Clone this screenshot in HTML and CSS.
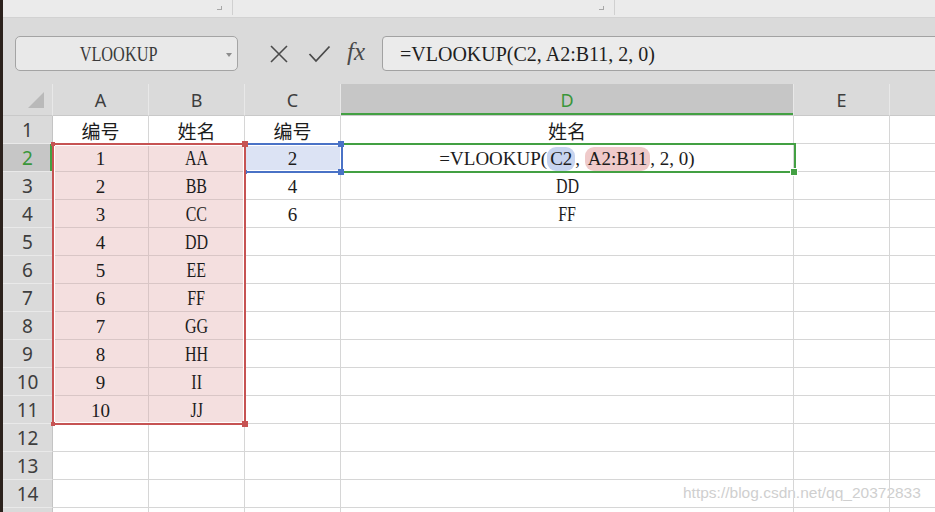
FILE: index.html
```html
<!DOCTYPE html>
<html lang="zh-CN">
<head>
<meta charset="utf-8">
<title>VLOOKUP</title>
<link rel="stylesheet" href="styles.css">
</head>
<body>
<div class="app">
  <div class="edge"></div>
  <div class="main">
    <div class="topbar">
      <div class="seg seg1"><span class="corner"></span></div>
      <div class="seg seg2"><span class="corner"></span></div>
    </div>
    <div class="toolbar">
      <div class="namebox"><span class="namebox-text">VLOOKUP</span><span class="caret"></span></div>
      <div class="fxbtns">
        <svg class="ico ico-x" width="20" height="20" viewBox="0 0 20 20"><path d="M2 2 L18 18 M18 2 L2 18" stroke="#4a4a4a" stroke-width="1.6" fill="none"/></svg>
        <svg class="ico ico-ok" width="23" height="20" viewBox="0 0 23 20"><path d="M1.5 10 L8 17 L21.5 2.5" stroke="#4a4a4a" stroke-width="1.8" fill="none"/></svg>
        <span class="fx">fx</span>
      </div>
      <div class="formula">=VLOOKUP(C2, A2:B11, 2, 0)</div>
    </div>
    <div class="sheet">
      <div class="grid">
        <div class="h corner-h"><span class="tri"></span></div>
        <div class="h col">A</div>
        <div class="h col">B</div>
        <div class="h col">C</div>
        <div class="h col col-act">D</div>
        <div class="h col">E</div>
        <div class="h col col-f"></div>

        <div class="h row">1</div>
        <div class="c">编号</div><div class="c">姓名</div><div class="c">编号</div><div class="c">姓名</div><div class="c"></div><div class="c"></div>

        <div class="h row row-act">2</div>
        <div class="c r">1</div><div class="c r"><span class="lat">AA</span></div><div class="c b">2</div>
        <div class="c">=VLOOKUP(<span class="ref ref-c">C2</span>, <span class="ref ref-a">A2:B11</span>, 2, 0)</div>
        <div class="c"></div><div class="c"></div>

        <div class="h row">3</div>
        <div class="c r">2</div><div class="c r"><span class="lat">BB</span></div><div class="c">4</div><div class="c"><span class="lat">DD</span></div><div class="c"></div><div class="c"></div>

        <div class="h row">4</div>
        <div class="c r">3</div><div class="c r"><span class="lat">CC</span></div><div class="c">6</div><div class="c"><span class="lat">FF</span></div><div class="c"></div><div class="c"></div>

        <div class="h row">5</div>
        <div class="c r">4</div><div class="c r"><span class="lat">DD</span></div><div class="c"></div><div class="c"></div><div class="c"></div><div class="c"></div>

        <div class="h row">6</div>
        <div class="c r">5</div><div class="c r"><span class="lat">EE</span></div><div class="c"></div><div class="c"></div><div class="c"></div><div class="c"></div>

        <div class="h row">7</div>
        <div class="c r">6</div><div class="c r"><span class="lat">FF</span></div><div class="c"></div><div class="c"></div><div class="c"></div><div class="c"></div>

        <div class="h row">8</div>
        <div class="c r">7</div><div class="c r"><span class="lat">GG</span></div><div class="c"></div><div class="c"></div><div class="c"></div><div class="c"></div>

        <div class="h row">9</div>
        <div class="c r">8</div><div class="c r"><span class="lat">HH</span></div><div class="c"></div><div class="c"></div><div class="c"></div><div class="c"></div>

        <div class="h row">10</div>
        <div class="c r">9</div><div class="c r"><span class="lat">II</span></div><div class="c"></div><div class="c"></div><div class="c"></div><div class="c"></div>

        <div class="h row">11</div>
        <div class="c r">10</div><div class="c r"><span class="lat">JJ</span></div><div class="c"></div><div class="c"></div><div class="c"></div><div class="c"></div>

        <div class="h row">12</div>
        <div class="c"></div><div class="c"></div><div class="c"></div><div class="c"></div><div class="c"></div><div class="c"></div>

        <div class="h row">13</div>
        <div class="c"></div><div class="c"></div><div class="c"></div><div class="c"></div><div class="c"></div><div class="c"></div>

        <div class="h row">14</div>
        <div class="c"></div><div class="c"></div><div class="c"></div><div class="c"></div><div class="c"></div><div class="c"></div>

        <div class="h row"></div>
        <div class="c"></div><div class="c"></div><div class="c"></div><div class="c"></div><div class="c"></div><div class="c"></div>
      </div>

      <div class="selbox sel-green"></div>
      <div class="handle h-green"></div>
      <div class="selbox sel-blue"></div>
      <div class="handle h-blue-tr"></div>
      <div class="handle h-blue-br"></div>
      <div class="handle h-blue-bl"></div>
      <div class="selbox sel-red"></div>
      <div class="handle h-red-tl"></div>
      <div class="handle h-red-tr"></div>
      <div class="handle h-red-br"></div>
      <div class="handle h-red-bl"></div>

      <div class="watermark">https://blog.csdn.net/qq_20372833</div>
    </div>
  </div>
</div>
</body>
</html>
```

FILE: styles.css
```css
* { box-sizing: border-box; }
html, body {
  margin: 0;
  padding: 0;
  width: 935px;
  height: 512px;
  overflow: hidden;
  background: #ffffff;
}
.app {
  display: flex;
  width: 935px;
  height: 512px;
  overflow: hidden;
}
.edge {
  width: 3px;
  flex: 0 0 3px;
  background: #2b211c;
}
.main {
  flex: 1;
  display: flex;
  flex-direction: column;
  min-width: 0;
}

/* top ribbon strip */
.topbar {
  height: 18px;
  flex: 0 0 18px;
  display: flex;
  background: #ebebeb;
  border-bottom: 1px solid #d2d2d2;
}
.seg {
  height: 15px;
  border-right: 1px solid #d0d0d0;
  position: relative;
}
.seg1 { width: 230px; }
.seg2 { width: 382px; }
.corner {
  position: absolute;
  right: 10px;
  top: 6px;
  width: 5px;
  height: 4px;
  border-right: 1px solid #a8a8a8;
  border-bottom: 1px solid #a8a8a8;
}

/* formula toolbar */
.toolbar {
  height: 66px;
  flex: 0 0 66px;
  background: #dadada;
  display: flex;
  align-items: flex-start;
  padding-top: 18px;
}
.namebox {
  margin-left: 12px;
  width: 223px;
  height: 35px;
  background: #e9e9e9;
  border: 1px solid #a4a4a4;
  border-radius: 5px;
  display: flex;
  align-items: center;
  justify-content: center;
  position: relative;
}
.namebox-text {
  display: inline-block;
  font-family: "Liberation Serif", serif;
  font-size: 22px;
  color: #3a3a3a;
  margin-left: -16px;
  transform: scaleX(0.74);
  padding-top: 1px;
}
.caret {
  position: absolute;
  right: 5px;
  top: 16px;
  width: 0;
  height: 0;
  border-left: 3px solid transparent;
  border-right: 3px solid transparent;
  border-top: 4px solid #8c8c8c;
}
.fxbtns {
  width: 144px;
  height: 35px;
  display: flex;
  align-items: center;
  padding-left: 31px;
}
.ico { display: block; }
.ico-ok { margin-left: 19px; }
.fx {
  margin-left: 16px;
  font-family: "Liberation Serif", serif;
  font-style: italic;
  font-size: 25px;
  color: #4a4a4a;
  margin-top: -3px;
}
.formula {
  flex: 1;
  height: 35px;
  margin-right: -12px;
  background: #ebebeb;
  border: 1px solid #a2a2a2;
  border-radius: 4px 0 0 4px;
  padding-left: 17px;
  padding-top: 1px;
  display: flex;
  align-items: center;
  font-family: "Liberation Serif", serif;
  font-size: 20px;
  color: #1e1e1e;
}

/* sheet */
.sheet {
  position: relative;
  flex: 1;
  min-height: 0;
}
.grid {
  display: grid;
  grid-template-columns: 50px 96px 96px 96px 453px 96px 60px;
  grid-template-rows: 32px repeat(15, 28px);
}
.h {
  background: #dadada;
  font-family: "Noto Sans", "Noto Sans CJK SC", sans-serif;
  font-size: 18px;
  color: #3e3e3e;
  display: flex;
  align-items: center;
  justify-content: center;
}
.col {
  border-right: 1px solid #e8e8e8;
  border-bottom: 1px solid #c9c9c9;
  padding-top: 1px;
}
.col-act {
  background: #c6c6c6;
  color: #3a963a;
  box-shadow: inset 0 -2px 0 #43a043;
}
.corner-h {
  border-right: 1px solid #e8e8e8;
  border-bottom: 1px solid #c9c9c9;
  position: relative;
}
.tri {
  position: absolute;
  left: 25px;
  top: 8px;
  width: 0;
  height: 0;
  border-left: 16px solid transparent;
  border-bottom: 16px solid #b9b9b9;
}
.row {
  border-right: 1px solid #c4c4c4;
  border-bottom: 1px solid #e9e9e9;
  font-size: 19px;
  padding-top: 1px;
}
.row-act {
  background: #c6c6c6;
  color: #3a963a;
  box-shadow: inset -2px 0 0 #43a043;
}
.c {
  border-right: 1px solid #d6d6d6;
  border-bottom: 1px solid #d6d6d6;
  display: flex;
  align-items: center;
  justify-content: center;
  padding-top: 2px;
  font-family: "Liberation Serif", "Noto Sans CJK SC", serif;
  font-size: 19px;
  color: #1c1c1c;
  white-space: pre;
  background: #ffffff;
}
.lat {
  display: inline-block;
  font-size: 20px;
  transform: scaleX(0.8);
}
.c.r {
  background: #f4dfdf;
  border-right-color: #d9c6c6;
  border-bottom-color: #d9c6c6;
}
.c.b {
  background: #dce3f4;
}
.ref {
  display: inline-block;
  line-height: 24px;
  padding: 0 3px;
  border-radius: 9px;
}
.ref-c { background: #c7d4ef; }
.ref-a { background: #efcaca; }

/* selection overlays */
.selbox {
  position: absolute;
  border: 2px solid;
}
.sel-red {
  left: 49px;
  top: 59px;
  width: 194px;
  height: 282px;
  border-color: #c65353;
  box-shadow: inset 0 0 0 1px #ffffff;
}
.sel-blue {
  left: 240px;
  top: 59px;
  width: 100px;
  height: 30px;
  border-color: #4a72c6;
  box-shadow: inset 0 0 0 1px #ffffff;
}
.sel-green {
  left: 337px;
  top: 59px;
  width: 456px;
  height: 30px;
  border-color: #43a043;
}
.handle {
  position: absolute;
  width: 6px;
  height: 6px;
}
.h-green { left: 788px; top: 85px; background: #43a043; box-shadow: 0 0 0 1px #ffffff; }
.h-blue-tr { left: 335px; top: 57px; background: #4a72c6; }
.h-blue-br { left: 335px; top: 85px; background: #4a72c6; }
.h-blue-bl { left: 240px; top: 86px; width: 4px; height: 4px; background: #4a72c6; }
.h-red-tl { left: 48px; top: 58px; width: 4px; height: 4px; background: #c65353; }
.h-red-tr { left: 239px; top: 57px; background: #c65353; }
.h-red-br { left: 239px; top: 337px; background: #c65353; }
.h-red-bl { left: 48px; top: 338px; width: 4px; height: 4px; background: #c65353; }

.watermark {
  position: absolute;
  left: 680px;
  top: 400px;
  font-family: "Liberation Sans", Arial, sans-serif;
  font-size: 15.5px;
  color: #cfcfcf;
  text-shadow: 0 0 1px #ffffff;
  white-space: nowrap;
}
```
